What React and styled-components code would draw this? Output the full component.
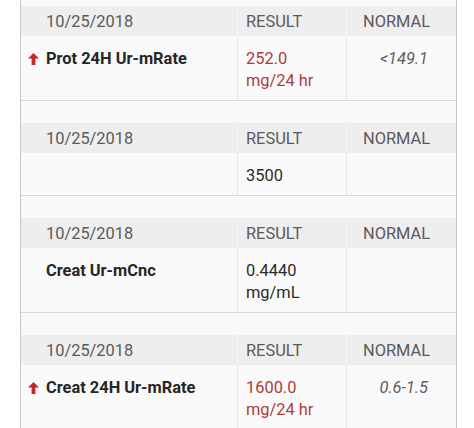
import React from "react";
import styled, {createGlobalStyle} from "styled-components";

const GlobalStyle = createGlobalStyle`
  html, body {
    margin: 0;
    padding: 0;
    background: #ffffff;
  }
  body {
    font-family: Roboto, "Liberation Sans", sans-serif;
  }
`;

const Frame = styled.div`
  margin-left: 20px;
  width: 437px;
  box-sizing: border-box;
  border-left: 1px solid #c6c6c6;
  border-right: 1px solid #c6c6c6;
  background: #f9f9f9;
  padding-top: 6px;
  display: flex;
  flex-direction: column;
  gap: 22px;
  height: 428px;
  overflow: hidden;
`;

const Card = styled.div`
  display: flex;
  flex-direction: column;
`;

const Row = styled.div`
  display: grid;
  grid-template-columns: 216px 109px 1fr;
`;

const HeaderRow = styled(Row)`
  height: 30px;
  background: #eeeeee;
  font-size: 16.4px;
  line-height: 31px;
  color: #5a5a5a;
`;

const HeadCell = styled.div`
  padding-left: ${p => p.$indent || 0}px;
  padding-right: ${p => p.$right || 0}px;
  text-align: ${p => p.$align || "left"};
  border-left: ${p => p.$sep ? "1px solid #f6f6f6" : "none"};
`;

const DataRow = styled(Row)`
  background: #fafafa;
  border-bottom: 1px solid #d9d9d9;
  font-size: 16.4px;
  line-height: 22px;
`;

const DataCell = styled.div`
  padding: 12px ${p => p.$right || 0}px 8px ${p => p.$indent || 0}px;
  text-align: ${p => p.$align || "left"};
  border-left: ${p => p.$sep ? "1px solid #e6e6e6" : "none"};
  min-height: 22px;
`;

const NameCell = styled(DataCell)`
  display: flex;
  align-items: flex-start;
  font-weight: 700;
  color: #262626;
`;

const FlagSlot = styled.span`
  width: 18px;
  flex: none;
  display: flex;
  align-items: center;
  height: 22px;
`;

const Value = styled.span`
  color: ${p => p.$high ? "#ad3b3b" : "#2a2a2a"};
  white-space: pre-line;
`;

const Range = styled.span`
  font-style: italic;
  color: #5e5e5e;
`;

const UpArrow = () => (
  <svg width="11" height="12" viewBox="0 0 11 12">
    <path d="M5.5 0 L11 5.6 L7.4 5.6 L7.4 12 L3.6 12 L3.6 5.6 L0 5.6 Z" fill="#c62828" />
  </svg>
);

const results = [
  {date: "10/25/2018", name: "Prot 24H Ur-mRate", value: "252.0\nmg/24 hr", range: "<149.1", high: true},
  {date: "10/25/2018", name: "", value: "3500", range: "", high: false},
  {date: "10/25/2018", name: "Creat Ur-mCnc", value: "0.4440\nmg/mL", range: "", high: false},
  {date: "10/25/2018", name: "Creat 24H Ur-mRate", value: "1600.0\nmg/24 hr", range: "0.6-1.5", high: true},
];

const ResultCard = ({item}) => (
  <Card>
    <HeaderRow>
      <HeadCell $indent={25}>{item.date}</HeadCell>
      <HeadCell $indent={8} $sep>RESULT</HeadCell>
      <HeadCell $right={26} $align="right" $sep>NORMAL</HeadCell>
    </HeaderRow>
    <DataRow>
      <NameCell $indent={7}>
        <FlagSlot>{item.high && <UpArrow />}</FlagSlot>
        {item.name}
      </NameCell>
      <DataCell $indent={8} $sep>
        <Value $high={item.high}>{item.value}</Value>
      </DataCell>
      <DataCell $right={28} $align="right" $sep>
        <Range>{item.range}</Range>
      </DataCell>
    </DataRow>
  </Card>
);

export default function App() {
  return (
    <>
      <GlobalStyle />
      <Frame>
        {results.map((r, i) => <ResultCard key={i} item={r} />)}
      </Frame>
    </>
  );
}
